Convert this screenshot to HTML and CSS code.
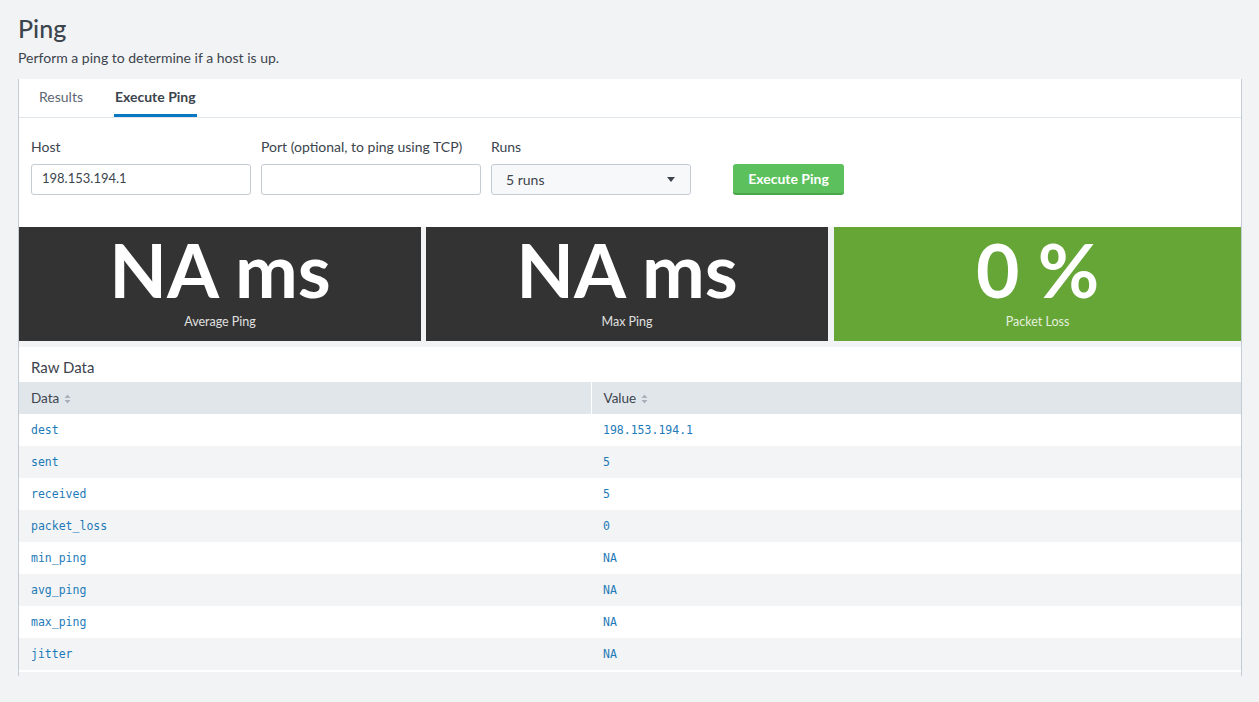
FILE: index.html
```html
<!DOCTYPE html>
<html>
<head>
<meta charset="utf-8">
<link rel="stylesheet" href="styles.css">
</head>
<body>
<header class="page-head">
  <h1 class="title">Ping</h1>
  <p class="subtitle">Perform a ping to determine if a host is up.</p>
</header>
<main class="panel">
  <nav class="tabs">
    <span class="tab">Results</span>
    <span class="tab active">Execute Ping</span>
  </nav>
  <section class="form">
    <div class="field">
      <label class="label">Host</label>
      <div class="input">198.153.194.1</div>
    </div>
    <div class="field">
      <label class="label">Port (optional, to ping using TCP)</label>
      <div class="input"></div>
    </div>
    <div class="field">
      <label class="label">Runs</label>
      <div class="select"><span>5 runs</span><span class="caret"></span></div>
    </div>
    <button class="btn">Execute Ping</button>
  </section>
  <section class="cards">
    <div class="card dark"><div class="big">NA ms</div><div class="cap">Average Ping</div></div>
    <div class="card dark"><div class="big">NA ms</div><div class="cap">Max Ping</div></div>
    <div class="card green"><div class="big">0 %</div><div class="cap">Packet Loss</div></div>
  </section>
  <section class="raw">
    <h2 class="raw-title">Raw Data</h2>
    <table class="tbl">
      <thead>
        <tr>
          <th class="c1">Data <svg class="sort" viewBox="0 0 7 10" width="7" height="10"><path d="M0.5 4 L3.5 0.5 L6.5 4 Z M0.5 6 L3.5 9.5 L6.5 6 Z"/></svg></th>
          <th>Value <svg class="sort" viewBox="0 0 7 10" width="7" height="10"><path d="M0.5 4 L3.5 0.5 L6.5 4 Z M0.5 6 L3.5 9.5 L6.5 6 Z"/></svg></th>
        </tr>
      </thead>
      <tbody>
        <tr><td>dest</td><td>198.153.194.1</td></tr>
        <tr><td>sent</td><td>5</td></tr>
        <tr><td>received</td><td>5</td></tr>
        <tr><td>packet_loss</td><td>0</td></tr>
        <tr><td>min_ping</td><td>NA</td></tr>
        <tr><td>avg_ping</td><td>NA</td></tr>
        <tr><td>max_ping</td><td>NA</td></tr>
        <tr><td>jitter</td><td>NA</td></tr>
      </tbody>
    </table>
  </section>
</main>
</body>
</html>
```
FILE: styles.css
```css
* { box-sizing: border-box; }
html, body { margin: 0; padding: 0; }
body {
  background: #f2f3f5;
  font-family: Lato, "Open Sans", sans-serif;
  color: #3c444d;
  height: 702px;
  overflow: hidden;
}
.page-head { padding: 14px 18px 0 18px; }
.title {
  margin: 0;
  font-size: 25px;
  font-weight: 500;
  line-height: 28px;
  color: #3c444d;
}
.subtitle {
  margin: 8px 0 0 0;
  font-size: 14px;
  line-height: 16px;
  color: #3c444d;
}
.panel {
  margin: 13px 17px 0 18px;
  border-left: 1px solid #c3cbd4;
  border-right: 1px solid #c3cbd4;
  padding-bottom: 4px;
}
.tabs {
  background: #fff;
  height: 39px;
  border-bottom: 1px solid #e1e6eb;
  display: flex;
  gap: 31px;
  padding-left: 20px;
}
.tab {
  font-size: 14px;
  line-height: 36px;
  color: #5c6773;
  border-bottom: 3px solid transparent;
  height: 38px;
}
.tab.active {
  color: #3c444d;
  font-weight: 700;
  border-bottom-color: #0877c4;
  padding: 0 1px;
}
.form {
  background: #fff;
  display: flex;
  align-items: flex-end;
  gap: 10px;
  padding: 20px 12px 32px 12px;
}
.field { display: flex; flex-direction: column; }
.label {
  font-size: 14px;
  line-height: 18px;
  margin-bottom: 8px;
  color: #3c444d;
}
.input {
  width: 220px;
  height: 31px;
  border: 1px solid #c3cbd4;
  border-radius: 3px;
  background: #fff;
  font-size: 13px;
  line-height: 27px;
  padding-left: 10px;
  color: #3c444d;
}
.select {
  width: 200px;
  height: 31px;
  border: 1px solid #c3cbd4;
  border-radius: 3px;
  background: #f7f8fa;
  font-size: 14px;
  line-height: 27px;
  padding: 0 15px 0 14px;
  display: flex;
  justify-content: space-between;
  align-items: center;
  color: #3c444d;
}
.caret {
  width: 0; height: 0;
  border-left: 4.5px solid transparent;
  border-right: 4.5px solid transparent;
  border-top: 5px solid #3c444d;
}
.btn {
  margin-left: 32px;
  width: 111px;
  height: 31px;
  border: none;
  border-bottom: 2px solid #4aa64a;
  border-radius: 3px;
  background: #5cc05c;
  color: #fff;
  font-family: Lato, "Open Sans", sans-serif;
  font-weight: 700;
  font-size: 14px;
  padding: 0;
}
.cards {
  display: grid;
  grid-template-columns: 402px 402px 1fr;
  column-gap: 5px;
  padding-bottom: 6px;
}
.card {
  height: 114px;
  display: flex;
  flex-direction: column;
  align-items: center;
  color: #fff;
}
.card.dark { background: #333333; }
.card.green { background: #65a637; margin-left: 1px; }
.big {
  font-size: 75px;
  font-weight: 700;
  line-height: 80px;
  margin-top: 2px;
}
.cap {
  font-size: 12.5px;
  line-height: 14px;
  margin-top: 6px;
  color: #e0e0e0;
}
.green .cap { color: #e6f0de; }
.raw { background: #fff; padding-bottom: 2px; }
.raw-title {
  margin: 0;
  font-size: 15px;
  font-weight: 400;
  line-height: 20px;
  padding: 10px 12px 5px 12px;
  color: #3c444d;
}
.tbl {
  width: 100%;
  border-collapse: collapse;
}
.tbl th {
  background: #e1e6eb;
  height: 32px;
  text-align: left;
  font-weight: 400;
  font-size: 13.5px;
  color: #3c444d;
  padding: 0 12px;
}
.tbl th.c1 { width: 572px; border-right: 1px solid #fff; }
.sort {
  fill: #a8b1ba;
  vertical-align: -1px;
  margin-left: 1px;
}
.tbl td {
  height: 32px;
  padding: 0 12px;
  font-family: "DejaVu Sans Mono", "Liberation Mono", monospace;
  font-size: 11.5px;
  color: #1e7ab8;
}
.tbl tbody tr:nth-child(even) td { background: #f2f4f5; }
```
